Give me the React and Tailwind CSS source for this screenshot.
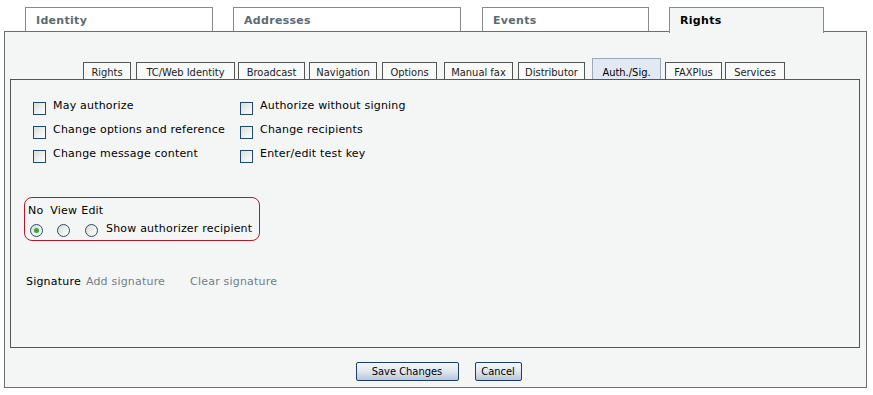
import React, { useState } from 'react';

const topTabs = [
  { label: 'Identity', w: 'w-[188px]', ml: 'ml-[25px]' },
  { label: 'Addresses', w: 'w-[228px]', ml: 'ml-[20px]' },
  { label: 'Events', w: 'w-[167px]', ml: 'ml-[21px]' },
  { label: 'Rights', w: 'w-[155px]', ml: 'ml-[20px]', active: true },
];

const subTabs = [
  { label: 'Rights', w: 'w-[48px]', ml: 'ml-[73px]' },
  { label: 'TC/Web Identity', w: 'w-[99px]', ml: 'ml-[5px]' },
  { label: 'Broadcast', w: 'w-[67px]', ml: 'ml-[3px]' },
  { label: 'Navigation', w: 'w-[68px]', ml: 'ml-[4px]' },
  { label: 'Options', w: 'w-[55px]', ml: 'ml-[5px]' },
  { label: 'Manual fax', w: 'w-[69px]', ml: 'ml-[7px]' },
  { label: 'Distributor', w: 'w-[67px]', ml: 'ml-[5px]' },
  { label: 'Auth./Sig.', w: 'w-[69px]', ml: 'ml-[7px]', active: true },
  { label: 'FAXPlus', w: 'w-[57px]', ml: 'ml-[4px]' },
  { label: 'Services', w: 'w-[60px]', ml: 'ml-[3px]' },
];

const leftChecks = ['May authorize', 'Change options and reference', 'Change message content'];
const rightChecks = ['Authorize without signing', 'Change recipients', 'Enter/edit test key'];

function Checkbox({ label }) {
  const [on, setOn] = useState(false);
  return (
    <label className="flex items-start h-[24px] cursor-default" onClick={() => setOn(!on)}>
      <span className="mt-[8px] w-[13px] h-[13px] border border-[#1f4a70] bg-gradient-to-br from-[#dcdcd6] to-white flex items-center justify-center text-[10px] leading-none text-[#21a121]">
        {on ? '✓' : ''}
      </span>
      <span className="ml-[7px] mt-[5px] text-[11px] leading-[14px] tracking-[0.2px] text-black">{label}</span>
    </label>
  );
}

function Radio({ checked }) {
  return (
    <span className="w-[13px] h-[13px] rounded-full border border-[#2c4a6a] bg-gradient-to-br from-[#dcdcd6] to-white flex items-center justify-center">
      {checked && <span className="w-[5px] h-[5px] rounded-full bg-[#3aa23a]" />}
    </span>
  );
}

export default function App() {
  return (
    <div className="w-[873px] h-[395px] bg-white pt-[7px] text-black" style={{ fontFamily: '"DejaVu Sans", Verdana, sans-serif' }}>
      {/* Main tabs */}
      <div className="flex h-[25px] relative z-10">
        {topTabs.map((t) => (
          <div
            key={t.label}
            className={`${t.w} ${t.ml} border border-b-0 border-[#8a8a8a] pl-[10px] pt-[5px] text-[11px] font-bold tracking-[0.3px] ${
              t.active ? 'bg-[#f4f6f6] text-black h-[26px]' : 'bg-white text-[#5c6b73] h-[24px] border-b border-b-[#8a8a8a]'
            }`}
          >
            {t.label}
          </div>
        ))}
      </div>

      {/* Outer panel */}
      <div className="ml-[4px] -mt-px w-[863px] h-[357px] border border-[#6e6e6e] bg-[#f4f6f6] flex flex-col">
        {/* Sub tabs */}
        <div className="flex items-end h-[47px] ml-[5px]">
          {subTabs.map((t) => (
            <div
              key={t.label}
              className={`${t.w} ${t.ml} border border-b-0 text-center text-[11px] leading-[14px] ${
                t.active
                  ? 'h-[21px] pt-[7px] bg-[#e2e9f2] border-[#9aaabb] text-black'
                  : 'h-[17px] pt-[3px] bg-[#f8f9f9] border-[#555] text-[#222]'
              }`}
              style={{ fontFamily: '"DejaVu Sans Condensed", "DejaVu Sans", sans-serif' }}
            >
              {t.label}
            </div>
          ))}
        </div>

        {/* Inner panel */}
        <div className="ml-[5px] w-[850px] h-[269px] border border-[#555] bg-[#f4f6f6] pt-[14px]">
          <div className="flex pl-[22px]">
            <div className="w-[207px]">
              {leftChecks.map((l) => (
                <Checkbox key={l} label={l} />
              ))}
            </div>
            <div>
              {rightChecks.map((l) => (
                <Checkbox key={l} label={l} />
              ))}
            </div>
          </div>

          {/* Authorizer recipient box */}
          <div className="ml-[13px] mt-[31px] w-[236px] h-[44px] border border-[#b01a30] rounded-[8px] pl-[3px] pt-[6px] text-[11px] leading-[14px] tracking-[0.2px]">
            <div className="flex">
              <span>No</span>
              <span className="ml-[7px]">View</span>
              <span className="ml-[4px]">Edit</span>
            </div>
            <div className="flex items-center mt-[6px]">
              <span className="ml-[2px]"><Radio checked /></span>
              <span className="ml-[14px]"><Radio /></span>
              <span className="ml-[15px]"><Radio /></span>
              <span className="ml-[8px] -mt-[4px]">Show authorizer recipient</span>
            </div>
          </div>

          {/* Signature */}
          <div className="flex ml-[15px] mt-[34px] text-[11px] leading-[14px] tracking-[0.2px]">
            <span>Signature</span>
            <span className="ml-[5px] text-[#71808a]">Add signature</span>
            <span className="ml-[25px] text-[#71808a]">Clear signature</span>
          </div>
        </div>

        {/* Buttons */}
        <div className="flex justify-center gap-[16px] pl-[6px] mt-[14px]" style={{ fontFamily: '"DejaVu Sans Condensed", "DejaVu Sans", sans-serif' }}>
          <button className="w-[103px] h-[19px] border border-[#1c3d6c] rounded-[2px] bg-gradient-to-b from-[#f4f7fb] via-[#dfe6ef] to-[#b9c6d6] text-[11px] leading-none text-black">
            Save Changes
          </button>
          <button className="w-[47px] h-[19px] border border-[#1c3d6c] rounded-[2px] bg-gradient-to-b from-[#f4f7fb] via-[#dfe6ef] to-[#b9c6d6] text-[11px] leading-none text-black">
            Cancel
          </button>
        </div>
      </div>
    </div>
  );
}
